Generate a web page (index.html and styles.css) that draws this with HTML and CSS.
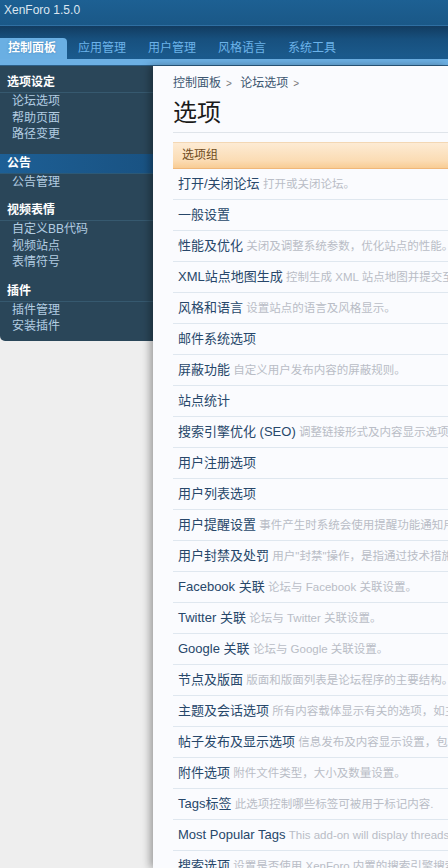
FILE: index.html
```html
<!DOCTYPE html>
<html>
	<head>
		<meta charset="UTF-8"/>
		<title>XenForo 1.5.0 - 选项</title>
		<link rel="stylesheet" href="styles.css">
	</head>
	<body>
		<div class="header">
			<div class="logo">XenForo 1.5.0</div>
			<ul class="tabs">
				<li class="tab active">控制面板</li>
				<li class="tab">应用管理</li>
				<li class="tab">用户管理</li>
				<li class="tab">风格语言</li>
				<li class="tab">系统工具</li>
			</ul>
			<div class="tabstrip"></div>
		</div>

		<div class="main">
			<div class="side">
				<div class="sidebar">
					<div class="section">
						<h3>选项设定</h3>
						<a>论坛选项</a>
						<a>帮助页面</a>
						<a>路径变更</a>
					</div>
					<div class="section">
						<h3 class="selected">公告</h3>
						<a>公告管理</a>
					</div>
					<div class="section">
						<h3>视频表情</h3>
						<a>自定义BB代码</a>
						<a>视频站点</a>
						<a>表情符号</a>
					</div>
					<div class="section">
						<h3>插件</h3>
						<a>插件管理</a>
						<a>安装插件</a>
					</div>
				</div>
			</div>

			<div class="content">
				<div class="breadcrumb">
					<span>控制面板</span><span class="gt">&gt;</span>
					<span>论坛选项</span><span class="gt">&gt;</span>
				</div>
				<h1 class="title">选项</h1>

				<div class="optionlist">
					<div class="listhead">选项组</div>
					<ul class="rows">
						<li><b>打开/关闭论坛</b> <i>打开或关闭论坛。</i></li>
						<li><b>一般设置</b></li>
						<li><b>性能及优化</b> <i>关闭及调整系统参数，优化站点的性能。</i></li>
						<li><b>XML站点地图生成</b> <i>控制生成 XML 站点地图并提交至搜索引擎。</i></li>
						<li><b>风格和语言</b> <i>设置站点的语言及风格显示。</i></li>
						<li><b>邮件系统选项</b></li>
						<li><b>屏蔽功能</b> <i>自定义用户发布内容的屏蔽规则。</i></li>
						<li><b>站点统计</b></li>
						<li><b>搜索引擎优化 (SEO)</b> <i>调整链接形式及内容显示选项。</i></li>
						<li><b>用户注册选项</b></li>
						<li><b>用户列表选项</b></li>
						<li><b>用户提醒设置</b> <i>事件产生时系统会使用提醒功能通知用户。</i></li>
						<li><b>用户封禁及处罚</b> <i>用户"封禁"操作，是指通过技术措施限制用户。</i></li>
						<li><b>Facebook 关联</b> <i>论坛与 Facebook 关联设置。</i></li>
						<li><b>Twitter 关联</b> <i>论坛与 Twitter 关联设置。</i></li>
						<li><b>Google 关联</b> <i>论坛与 Google 关联设置。</i></li>
						<li><b>节点及版面</b> <i>版面和版面列表是论坛程序的主要结构。</i></li>
						<li><b>主题及会话选项</b> <i>所有内容载体显示有关的选项，如主题。</i></li>
						<li><b>帖子发布及显示选项</b> <i>信息发布及内容显示设置，包括签名。</i></li>
						<li><b>附件选项</b> <i>附件文件类型，大小及数量设置。</i></li>
						<li><b>Tags标签</b> <i>此选项控制哪些标签可被用于标记内容.</i></li>
						<li><b>Most Popular Tags</b> <i>This add-on will display threads tags.</i></li>
						<li><b>搜索选项</b> <i>设置是否使用 XenForo 内置的搜索引擎搜索。</i></li>
					</ul>
				</div>
			</div>
		</div>
	</body>
</html>
```

FILE: styles.css
```css
html, body{
	margin: 0;
	padding: 0;
}
body{
	width: 448px;
	height: 868px;
	overflow: hidden;
	background: #eeeeee;
	font-family: "Liberation Sans", "Noto Sans CJK SC", sans-serif;
	font-size: 12px;
}

/* top bar */
div.header{
	background: #1b5a8c;
}
div.logo{
	height: 25px;
	line-height: 21px;
	padding-left: 4px;
	color: #dbe6f0;
	font-size: 12px;
	background: linear-gradient(#1d6093, #1a5887);
	border-bottom: 1px solid #2f6fa2;
}
ul.tabs{
	display: flex;
	align-items: flex-end;
	margin: 0;
	padding: 0;
	list-style: none;
	height: 33px;
	background: linear-gradient(#123c60, #17507e 40%, #1b5b8e);
}
li.tab{
	height: 21px;
	line-height: 21px;
	padding: 0 11px;
	color: #6cb3ea;
	font-size: 12px;
}
li.tab.active{
	padding-left: 8px;
	color: #ffffff;
	font-weight: bold;
	background: #6aafe3;
	border-top-right-radius: 4px;
	text-shadow: 0 0 2px #3d7fb4;
}
div.tabstrip{
	height: 6px;
	background: #6cb0e4;
	border-bottom: 1px solid #2c5f88;
}

/* page body */
div.main{
	display: flex;
	align-items: stretch;
	height: 802px;
}
div.side{
	width: 153px;
	flex: none;
}
div.sidebar{
	background: #2a4659;
	padding: 7px 0 6px 0;
	border-bottom-left-radius: 5px;
}
div.section{
	margin-bottom: 11px;
}
div.section:last-child{
	margin-bottom: 0;
}
div.sidebar h3{
	margin: 0;
	height: 19px;
	line-height: 19px;
	padding-left: 7px;
	color: #ffffff;
	font-size: 12px;
	font-weight: bold;
	border-bottom: 1px solid #36596f;
}
div.sidebar h3.selected{
	background: linear-gradient(to right, #1d5f95, #195282);
	border-bottom-color: #2c5977;
}
div.sidebar a{
	display: block;
	padding-left: 12px;
	line-height: 16.5px;
	color: #b3cde2;
	font-size: 12px;
}

/* main panel */
div.content{
	flex: 1;
	min-width: 0;
	padding: 8px 0 0 20px;
	background: #fafbfe;
	box-shadow: -3px 0 8px rgba(0, 0, 0, 0.35);
	overflow: hidden;
}
div.breadcrumb{
	line-height: 18px;
	color: #3c5670;
	font-size: 12px;
	white-space: nowrap;
}
div.breadcrumb span.gt{
	margin: 0 5px;
	color: #777;
	font-size: 10px;
}
h1.title{
	margin: 5px 0 0 0;
	padding-bottom: 4px;
	line-height: 30px;
	font-size: 24px;
	font-weight: normal;
	color: #1a1a1a;
	border-bottom: 1px solid #dfe4ea;
}
div.optionlist{
	margin-top: 9px;
}
div.listhead{
	height: 25px;
	line-height: 25px;
	padding-left: 9px;
	color: #6d4b22;
	font-size: 12px;
	background: linear-gradient(#fdebd4, #fbdcb4 70%, #f8cc94);
	border-top: 1px solid #f3d7b4;
	border-bottom: 1px solid #f0b779;
}
ul.rows{
	margin: 0;
	padding: 0;
	list-style: none;
}
ul.rows li{
	height: 30px;
	line-height: 30px;
	padding-left: 5px;
	white-space: nowrap;
	border-bottom: 1px solid #dfe7ef;
}
ul.rows b{
	font-weight: normal;
	font-size: 13px;
	color: #27476a;
}
ul.rows i{
	font-style: normal;
	font-size: 11.5px;
	color: #b9bdc6;
}
```
